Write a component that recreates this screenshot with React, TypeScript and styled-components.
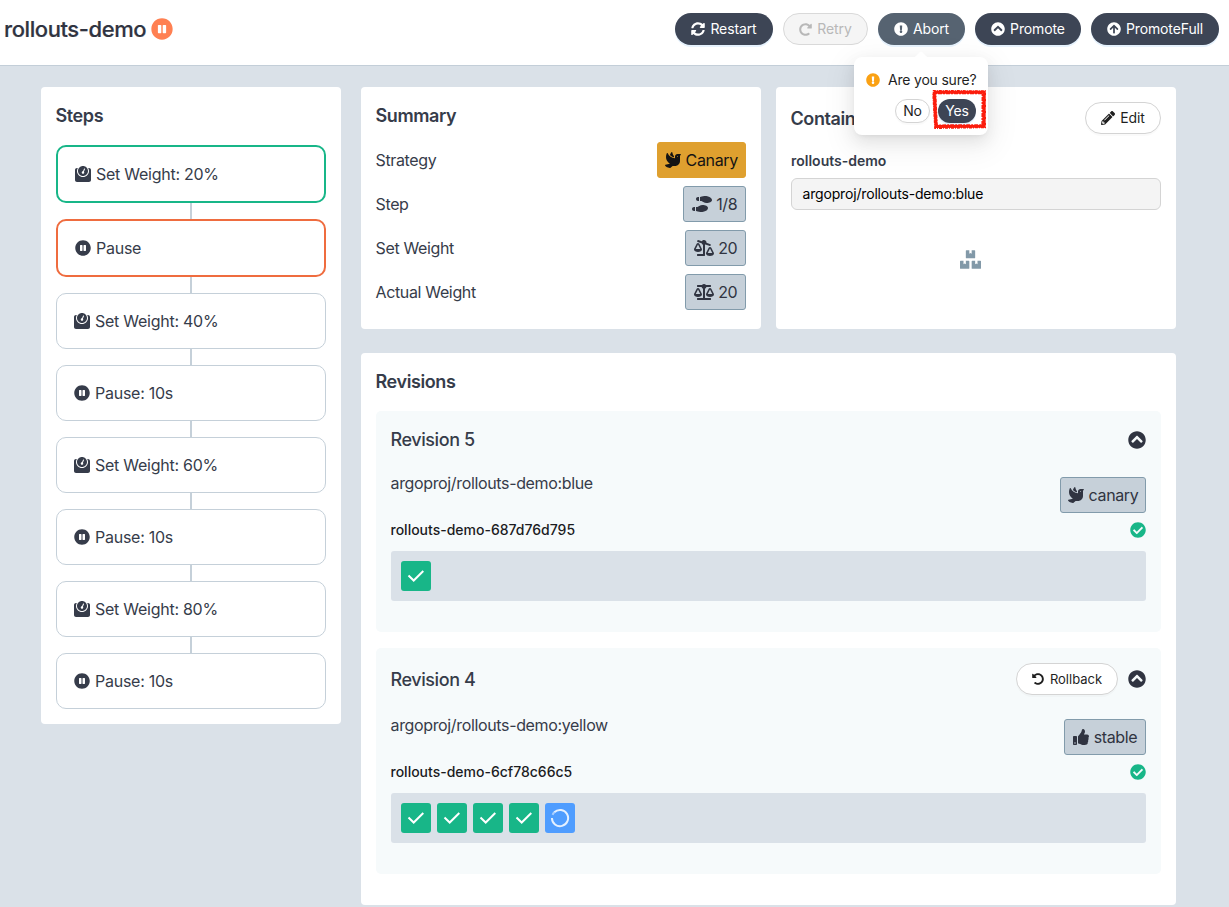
import React from 'react';
import styled, { createGlobalStyle, css } from 'styled-components';
import {
  FaSyncAlt, FaRedoAlt, FaExclamationCircle, FaChevronCircleUp, FaArrowCircleUp, FaPencilAlt,
  FaUndoAlt, FaDove, FaShoePrints, FaBalanceScale, FaBalanceScaleRight, FaBoxes, FaThumbsUp,
  FaCheckCircle, FaPauseCircle, FaWeight,
} from 'react-icons/fa';

const GlobalStyle = createGlobalStyle`
  *, *::before, *::after { box-sizing: border-box; }
  body {
    margin: 0;
    background: #dae1e8;
    color: #363c4a;
    font-family: Inter, "Liberation Sans", sans-serif;
    font-size: 16px;
    line-height: 24px;
    letter-spacing: -0.35px;
  }
  svg { display: block; flex: none; }
`;

const Page = styled.div`
  height: 907px;
  overflow: hidden;
`;

const Header = styled.header`
  display: flex;
  align-items: flex-start;
  justify-content: space-between;
  height: 66px;
  padding: 13px 10px 0 4px;
  background: #fff;
  border-bottom: 1px solid #c3ced8;
`;

const Title = styled.h1`
  display: flex;
  align-items: center;
  gap: 5px;
  height: 32px;
  margin: 0;
  font-size: 22px;
  font-weight: 500;
  letter-spacing: -0.42px;
  color: #303441;
  -webkit-text-stroke: 0.2px #303441;
  svg { color: #ff8052; }
`;

const Actions = styled.div`
  display: flex;
  gap: 10px;
`;

type Kind = 'dark' | 'hover' | 'disabled' | 'light';

const kinds = {
  dark: css`background: #3d4555; color: #fff; box-shadow: 0 2px 0 #e6f2fd;`,
  hover: css`background: #566371; color: #fff; box-shadow: 0 2px 0 #e6f2fd;`,
  disabled: css`background: #f5f5f5; color: #b8b8b8; border: 1px solid #d9d9d9;`,
  light: css`background: #fff; color: #1f1f1f; border: 1px solid #d4d4d4; box-shadow: 0 2px 0 rgba(0, 0, 0, 0.02);`,
};

const Button = styled.button<{ $kind: Kind; $width: number; $small?: boolean }>`
  display: flex;
  align-items: center;
  justify-content: center;
  gap: 5px;
  width: ${p => p.$width}px;
  height: ${p => (p.$small ? 24 : 32)}px;
  padding: 0;
  border: 0;
  border-radius: 16px;
  font: 400 14px/22px Inter, "Liberation Sans", sans-serif;
  letter-spacing: -0.12px;
  white-space: nowrap;
  ${p => kinds[p.$kind]}
`;

const RollbackButton = styled(Button)`
  gap: 6px;
  font-size: 13px;
  letter-spacing: 0;
`;

const AbortSlot = styled.div`
  position: relative;
`;

const Popover = styled.div`
  position: absolute;
  z-index: 2;
  top: 44px;
  left: -24px;
  width: 134px;
  height: 78px;
  padding: 12px;
  border-radius: 8px;
  background: #fff;
  color: #1f1f1f;
  font-size: 14px;
  line-height: 22px;
  letter-spacing: -0.2px;
  box-shadow: 0 6px 16px rgba(0, 0, 0, 0.08), 0 3px 6px -4px rgba(0, 0, 0, 0.12), 0 9px 28px 8px rgba(0, 0, 0, 0.05);
`;

const PopoverArrow = styled.svg`
  position: absolute;
  top: -6px;
  left: 59px;
`;

const Question = styled.div`
  display: flex;
  align-items: center;
  gap: 8px;
  white-space: nowrap;
  svg { color: #faa114; }
`;

const Choices = styled.div`
  display: flex;
  justify-content: flex-end;
  gap: 8px;
  margin-top: 8px;
`;

const Highlight = styled.svg`
  position: absolute;
  top: 33px;
  left: 78px;
`;

const Main = styled.main`
  display: flex;
  align-items: flex-start;
  gap: 20px;
  padding: 21px 53px 0 41px;
`;

const Card = styled.section<{ $width?: number; $height?: number }>`
  width: ${p => (p.$width ? `${p.$width}px` : 'auto')};
  height: ${p => (p.$height ? `${p.$height}px` : 'auto')};
  padding: 15px;
  border-radius: 4px;
  background: #fff;
`;

const CardTitle = styled.h2`
  margin: 0;
  padding-top: 2px;
  font-size: 18px;
  font-weight: 600;
  line-height: 24px;
  letter-spacing: -0.4px;
  text-indent: -0.5px;
`;

const StepList = styled.div`
  display: flex;
  flex-direction: column;
  margin-top: 17px;
`;

const Step = styled.div<{ $state?: 'done' | 'current' }>`
  display: flex;
  align-items: center;
  gap: 5px;
  height: ${p => (p.$state ? 58 : 56)}px;
  padding-left: 17px;
  letter-spacing: -0.26px;
  border-radius: 10px;
  border: ${p => (p.$state ? '2px' : '1px')} solid
    ${p => (p.$state === 'done' ? '#18b688' : p.$state === 'current' ? '#ef6c3f' : '#c5d0d9')};
`;

const Connector = styled.div`
  align-self: center;
  width: 2px;
  height: 16px;
  background: #c5d0d9;
`;

const Column = styled.div`
  display: flex;
  flex-direction: column;
  gap: 24px;
`;

const TopRow = styled.div`
  display: flex;
  gap: 15px;
`;

const SummaryList = styled.div`
  display: flex;
  flex-direction: column;
  gap: 8px;
  margin-top: 14px;
  text-indent: -0.5px;
`;

const SummaryItem = styled.div`
  display: flex;
  align-items: center;
  justify-content: space-between;
`;

const Tag = styled.span<{ $canary?: boolean; $width: number }>`
  display: flex;
  align-items: center;
  justify-content: center;
  gap: 5px;
  width: ${p => p.$width}px;
  height: 36px;
  border-radius: 3px;
  border: 1px solid ${p => (p.$canary ? '#dfa02f' : '#829bab')};
  background: ${p => (p.$canary ? '#dfa02f' : '#c6d0d9')};
  color: ${p => (p.$canary ? '#141414' : '#303441')};
`;

const SplitRow = styled.div`
  display: flex;
  align-items: center;
  justify-content: space-between;
`;

const ContainerName = styled.div`
  margin-top: 15px;
  font-size: 14px;
  font-weight: 600;
  letter-spacing: 0;
`;

const ImageInput = styled.div`
  height: 32px;
  margin-top: 5px;
  padding: 0 10.5px;
  border: 1px solid #d4d4d4;
  border-radius: 6px;
  background: #f4f4f4;
  color: #000;
  font-size: 14px;
  line-height: 30px;
  letter-spacing: -0.17px;
`;

const Empty = styled.div`
  display: flex;
  justify-content: center;
  margin-top: 39px;
  padding-right: 11px;
  color: #8299a8;
`;

const RevisionList = styled.div`
  display: flex;
  flex-direction: column;
  gap: 16px;
  margin-top: 17px;
`;

const RevisionCard = styled.article`
  padding: 15px 15px 31px;
  border-radius: 5px;
  background: #f6fafb;
`;

const RevisionHeader = styled.div`
  display: flex;
  align-items: center;
  gap: 10px;
  min-height: 27px;
`;

const RevisionTitle = styled.h3`
  flex: 1;
  margin: 0;
  padding-top: 1px;
  font-size: 18px;
  font-weight: 500;
  line-height: 24px;
  letter-spacing: -0.42px;
  text-indent: -0.5px;
`;

const RevisionInfo = styled.div`
  display: flex;
  align-items: flex-start;
  justify-content: space-between;
  margin-top: 24px;
`;

const ImageName = styled.div`
  margin-top: -6px;
  text-indent: -0.5px;
`;

const ReplicaSet = styled.div`
  display: flex;
  align-items: center;
  justify-content: space-between;
  height: 16px;
  margin: 9px 0 13px;
  color: #1c1c1f;
  font-size: 14px;
  font-weight: 500;
  letter-spacing: 0;
  text-indent: -0.5px;
  svg { color: #18b688; }
`;

const Pods = styled.div`
  display: flex;
  gap: 6px;
  height: 50px;
  padding: 10px;
  border-radius: 3px;
  background: #dae1e8;
`;

const Pod = styled.div<{ $pending?: boolean }>`
  display: flex;
  align-items: center;
  justify-content: center;
  width: 30px;
  height: 30px;
  border-radius: 3px;
  background: ${p => (p.$pending ? '#4f9dff' : '#18b688')};
`;

const HealthyMark = () => (
  <svg width="18" height="14" viewBox="0 0 18 14" fill="none" stroke="#fff" strokeWidth="2">
    <path d="M1.5 6.5 L6.7 11.5 L16.3 2" />
  </svg>
);

const PendingMark = () => (
  <svg width="20" height="20" viewBox="0 0 20 20" fill="none" stroke="#e4f0ff" strokeWidth="2">
    <path d="M1.9 10 A8.1 8.1 0 1 0 4.3 4.3" />
    <path d="M4.3 4.3 A8.1 8.1 0 0 0 2.6 6.8" strokeOpacity="0.6" />
  </svg>
);

const steps: { label: string; weight?: boolean; state?: 'done' | 'current' }[] = [
  { label: 'Set Weight: 20%', weight: true, state: 'done' },
  { label: 'Pause', state: 'current' },
  { label: 'Set Weight: 40%', weight: true },
  { label: 'Pause: 10s' },
  { label: 'Set Weight: 60%', weight: true },
  { label: 'Pause: 10s' },
  { label: 'Set Weight: 80%', weight: true },
  { label: 'Pause: 10s' },
];

const revisions = [
  { n: 5, image: 'argoproj/rollouts-demo:blue', rs: 'rollouts-demo-687d76d795', tag: 'canary', width: 86, healthy: 1, pending: 0 },
  { n: 4, image: 'argoproj/rollouts-demo:yellow', rs: 'rollouts-demo-6cf78c66c5', tag: 'stable', width: 82, healthy: 4, pending: 1 },
];

export default function App() {
  return (
    <Page>
      <GlobalStyle />
      <Header>
        <Title>rollouts-demo <FaPauseCircle size={22} /></Title>
        <Actions>
          <Button $kind="dark" $width={98}><FaSyncAlt size={14} />Restart</Button>
          <Button $kind="disabled" $width={85}><FaRedoAlt size={13} />Retry</Button>
          <AbortSlot>
            <Button $kind="hover" $width={87}><FaExclamationCircle size={14} />Abort</Button>
            <Popover>
              <PopoverArrow width="16" height="7" viewBox="0 0 16 7" fill="#fff">
                <path d="M0 7 Q2 6 3 5 L7 1 Q8 0 9 1 L13 5 Q14 6 16 7Z" />
              </PopoverArrow>
              <Question><FaExclamationCircle size={14} />Are you sure?</Question>
              <Choices>
                <Button $kind="light" $width={35} $small>No</Button>
                <Button $kind="dark" $width={38} $small>Yes</Button>
              </Choices>
              <Highlight width="54" height="39" viewBox="0 0 54 39" fill="none" stroke="#fb1d0d">
                <path strokeWidth="3" d="M2 2 L52 2.2 L51.8 36.2 L4 36.6 L2.2 2 Z" />
                <path strokeWidth="1.6" strokeDasharray="3 1 1 1" d="M.8 .8 L53.2 1 L53.2 37.4 L3 38.2 L1 3" />
                <path strokeWidth="1.6" strokeDasharray="2 1 4 1" d="M3 3.4 L50.4 3.4 L50.2 35 L5 35.2 L3.6 4" />
              </Highlight>
            </Popover>
          </AbortSlot>
          <Button $kind="dark" $width={106}><FaChevronCircleUp size={14} />Promote</Button>
          <Button $kind="dark" $width={128}><FaArrowCircleUp size={14} />PromoteFull</Button>
        </Actions>
      </Header>
      <Main>
        <Card $width={300}>
          <CardTitle>Steps</CardTitle>
          <StepList>
            {steps.map((s, i) => (
              <React.Fragment key={i}>
                {i > 0 && <Connector />}
                <Step $state={s.state}>
                  {s.weight ? <FaWeight size={16} /> : <FaPauseCircle size={16} />}
                  {s.label}
                </Step>
              </React.Fragment>
            ))}
          </StepList>
        </Card>
        <Column>
          <TopRow>
            <Card $width={400} $height={242}>
              <CardTitle>Summary</CardTitle>
              <SummaryList>
                <SummaryItem>Strategy<Tag $canary $width={89}><FaDove size={16} />Canary</Tag></SummaryItem>
                <SummaryItem>Step<Tag $width={63}><FaShoePrints size={20} />1/8</Tag></SummaryItem>
                <SummaryItem>Set Weight<Tag $width={61}><FaBalanceScaleRight size={20} />20</Tag></SummaryItem>
                <SummaryItem>Actual Weight<Tag $width={61}><FaBalanceScale size={20} />20</Tag></SummaryItem>
              </SummaryList>
            </Card>
            <Card $width={400} $height={242}>
              <SplitRow>
                <CardTitle>Containers</CardTitle>
                <Button $kind="light" $width={76}><FaPencilAlt size={14} />Edit</Button>
              </SplitRow>
              <ContainerName>rollouts-demo</ContainerName>
              <ImageInput>argoproj/rollouts-demo:blue</ImageInput>
              <Empty><FaBoxes size={21} /></Empty>
            </Card>
          </TopRow>
          <Card $height={552}>
            <CardTitle>Revisions</CardTitle>
            <RevisionList>
              {revisions.map(r => (
                <RevisionCard key={r.n}>
                  <RevisionHeader>
                    <RevisionTitle>Revision {r.n}</RevisionTitle>
                    {r.tag === 'stable' && (
                      <RollbackButton $kind="light" $width={102}><FaUndoAlt size={12} />Rollback</RollbackButton>
                    )}
                    <FaChevronCircleUp size={18} color="#303441" />
                  </RevisionHeader>
                  <RevisionInfo>
                    <ImageName>{r.image}</ImageName>
                    <Tag $width={r.width}>
                      {r.tag === 'canary' ? <FaDove size={16} /> : <FaThumbsUp size={16} />}
                      {r.tag}
                    </Tag>
                  </RevisionInfo>
                  <ReplicaSet>{r.rs}<FaCheckCircle size={16} /></ReplicaSet>
                  <Pods>
                    {Array.from({ length: r.healthy }, (_, i) => <Pod key={i}><HealthyMark /></Pod>)}
                    {r.pending > 0 && <Pod $pending><PendingMark /></Pod>}
                  </Pods>
                </RevisionCard>
              ))}
            </RevisionList>
          </Card>
        </Column>
      </Main>
    </Page>
  );
}
